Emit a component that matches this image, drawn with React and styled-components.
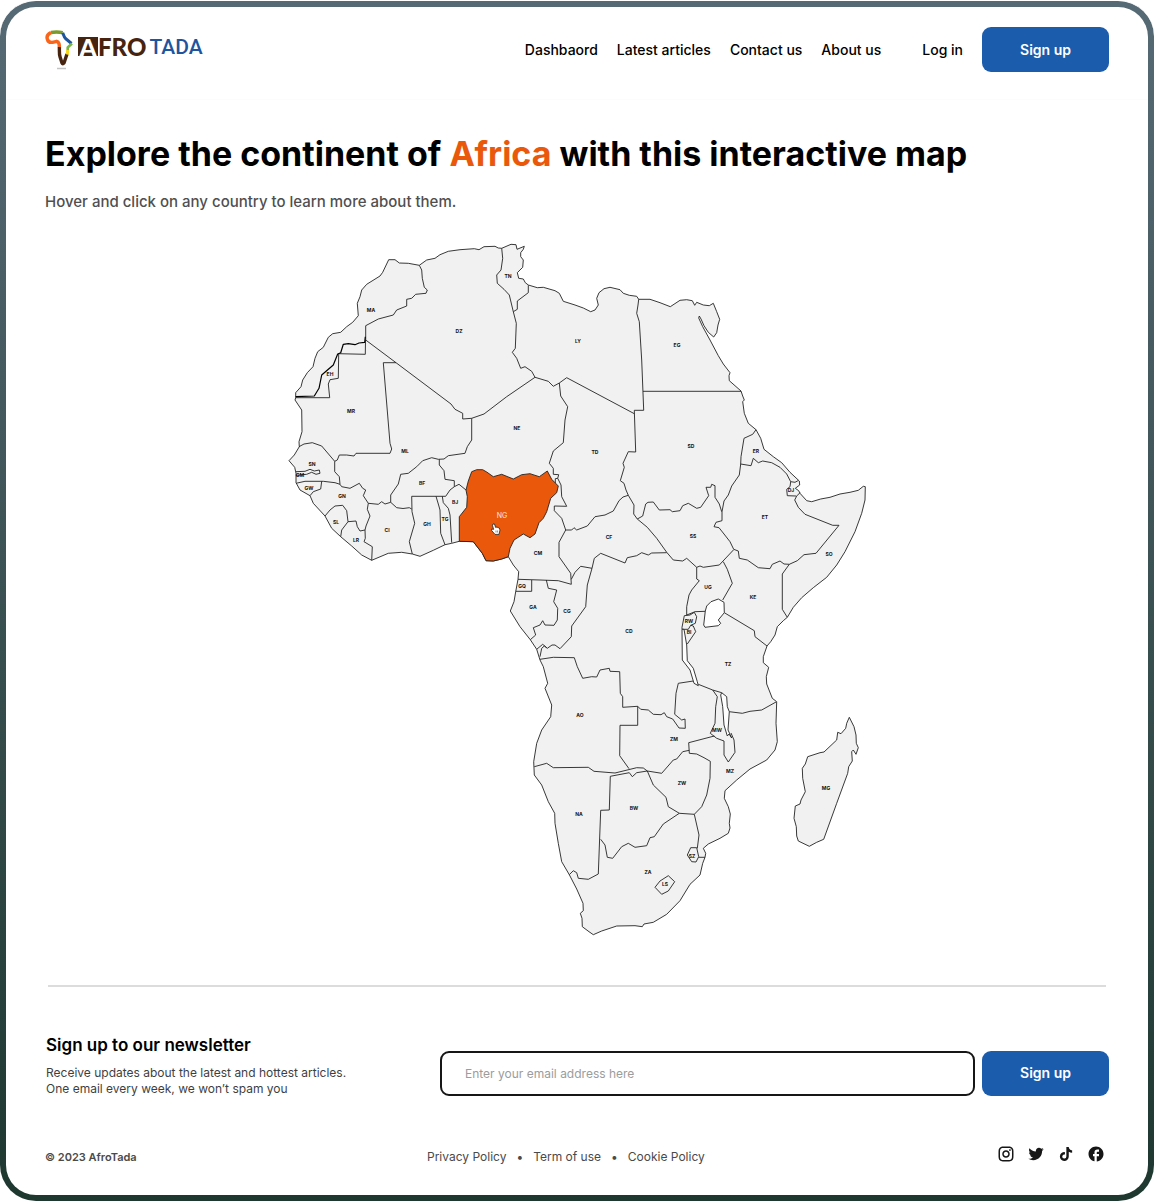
import React from "react";
import styled, { createGlobalStyle } from "styled-components";
import { RiInstagramLine, RiTwitterFill } from "react-icons/ri";
import { MdFacebook } from "react-icons/md";
import { FaTiktok } from "react-icons/fa";

const GlobalStyle = createGlobalStyle`
  *, *::before, *::after { box-sizing: border-box; }
  body {
    margin: 0;
    background: #fff;
    color: #000;
    font-family: Inter, "Liberation Sans", sans-serif;
  }
  h1, h2, p { margin: 0; }
  a { color: inherit; text-decoration: none; }
`;

const Frame = styled.div`
  display: flex;
  min-height: 100vh;
  padding: 6px;
  border-top: 1px solid #fff;
  border-radius: 36px;
  background: linear-gradient(#566a75, #1e372f);
`;

const Page = styled.div`
  flex: 1;
  min-width: 0;
  background: #fff;
  border-radius: 30px;
`;

const Header = styled.header`
  display: flex;
  align-items: center;
  justify-content: space-between;
  padding: 20px 39px 27px;
  border-bottom: 1px solid #fcfcfc;
`;

const Logo = styled.a`
  display: flex;
  align-items: center;
  height: 45px;
`;

const LogoMark = styled.svg`
  width: 28px;
  height: 40px;
  margin-right: 5px;
`;

const LogoText = styled.span`
  display: flex;
  align-items: center;
  padding-bottom: 6px;
`;

const LogoInitial = styled.span`
  width: 20px;
  height: 19px;
  background: #46240f;
  color: #fff;
  font: 900 25px/20px Lato, sans-serif;
  text-align: center;
`;

const LogoWord = styled.span`
  color: ${(p) => (p.$accent ? "#1d559f" : "#46240f")};
  font: ${(p) => (p.$accent ? "500 21px/24px Roboto" : "900 24px/24px Lato")}, sans-serif;
  margin-left: ${(p) => (p.$accent ? 3 : 0)}px;
`;

const Nav = styled.nav`
  display: flex;
  align-items: center;
  gap: 19px;
  font-size: 14px;
  font-weight: 500;
  line-height: 20px;
`;

const LoginLink = styled.a`
  margin-left: 22px;
`;

const Button = styled.button`
  flex: none;
  width: 127px;
  height: 45px;
  border: 0;
  border-radius: 9px;
  background: #1c5cad;
  color: #fff;
  font: 600 14px/20px Inter, sans-serif;
`;

const Main = styled.main`
  padding: 34px 39px 0;
`;

const Title = styled.h1`
  font-size: 34px;
  line-height: 40px;
  font-weight: 700;
`;

const Highlight = styled.span`
  color: #ea580c;
`;

const Subtitle = styled.p`
  margin-top: 18px;
  color: #4f4f4f;
  font-size: 15px;
  line-height: 20px;
  font-weight: 500;
`;

const MapDrawing = styled.svg`
  display: block;
  width: 100%;
  max-width: 600px;
  margin: 24px auto 0;
  stroke-linejoin: round;

  text {
    font: 700 5px Inter, sans-serif;
    text-anchor: middle;
    fill: #111;
  }
`;

const Footer = styled.footer`
  margin: 40px 39px 0;
`;

const Divider = styled.hr`
  height: 2px;
  margin: 0 3px;
  border: 0;
  background: #dcdcdc;
`;

const Newsletter = styled.section`
  display: flex;
  align-items: center;
  padding-top: 46px;
`;

const Intro = styled.div`
  flex: none;
  width: 395px;
  padding-left: 1px;
`;

const IntroTitle = styled.h2`
  font-size: 17px;
  line-height: 24px;
  font-weight: 600;
`;

const IntroText = styled.p`
  margin-top: 8px;
  color: #3f3f3f;
  font-size: 12px;
  line-height: 16px;
`;

const Form = styled.form`
  display: flex;
  align-items: center;
  flex: 1;
  min-width: 0;
  gap: 7px;
  padding-top: 16px;
`;

const EmailInput = styled.input`
  flex: 1;
  min-width: 0;
  height: 45px;
  padding: 0 23px;
  border: 2px solid #161616;
  border-radius: 9px;
  background: #fff;
  font: 400 12px/16px Inter, sans-serif;

  &::placeholder { color: #9c9c9c; opacity: 1; }
`;

const Bottom = styled.div`
  display: flex;
  align-items: center;
  padding-top: 48px;
  color: #4a4a4a;
  font-size: 12px;
  line-height: 24px;
`;

const Copyright = styled.p`
  flex: none;
  width: 382px;
  font-size: 11px;
  font-weight: 600;
`;

const Legal = styled.nav`
  display: flex;
  flex: 1;
  gap: 10px;
`;

const Social = styled.div`
  display: flex;
  gap: 12px;
  padding: 0 4px 6px 0;
  color: #161616;

  a {
    display: flex;
    align-items: center;
    justify-content: center;
    width: 18px;
    height: 18px;
  }
`;

const CONTINENT =
  "M295.7 397.7 295.7 392.7 301 386.7 302.7 380 307.3 372.7 313 366.7 315 358.3 317.7 351.7 323.3 347.3 328.3 337.3 332.7 333.7 340.7 332.3 346.7 326.7 352.7 322.3 358.3 315.7 357.3 303.3 360 296.7 361.7 290 366.7 284.3 380 276 382.7 272.3 388.7 259.7 395 259.7 399.3 263 408.3 263.3 419.3 265.3 426.7 260 435 258.3 440 254.7 448.3 251.3 460 249.7 474.3 248.7 479 249.7 484 246.7 495 246.3 498.3 248 501.7 248.3 511 244.3 516 244.7 517 249.3 524.3 246.3 523.3 249.3 520.7 252.7 520.7 256.7 523.3 260 522.7 267.3 517.3 272.7 518.7 278.3 523.3 279 525.3 282.7 528.3 285 537.3 287.7 543.3 287.3 555 290.7 559.3 293.3 563.3 301.3 575 305 583.3 308 590.7 311.7 595 310 598.3 305 596.7 298.3 599 292.7 604 288.7 610 287.3 620 289.7 623.3 293.3 629.3 295.3 636.7 296.3 638.7 299.3 650 299.3 660 302.7 670.3 306.7 680 300.3 686.7 299.7 692.3 300.7 694.7 305.3 696.7 302.3 703.3 305 709.3 305.7 713.3 303.3 716.7 311.7 719.7 319.3 718 325 716.7 332.7 713.7 337 708.3 332.3 704 325.7 701 319 699.3 316 698.7 318 702.7 326.7 710 340 718.3 355.7 723.3 364 730 372.7 729 375.7 729.3 380.7 741 391 742.7 396 744.3 400 742.7 401.7 744.3 413.3 748.3 423.3 756 429.7 760.7 438.3 764 449.3 773.3 456.7 781.7 462.7 790 472.3 799.3 481 799.7 485 795.3 488.3 798.7 490.7 800 493.3 806.7 500.7 811.7 501.7 820.7 499 830 497.3 840 494 850 492.3 858.3 490.3 863.3 486.3 865.3 486.7 865 500 861.7 513.3 855 531.7 845 551.7 836.7 565 826.7 577.3 813.3 587.7 801.7 597.7 793.3 607.3 787.3 617.3 783.3 620.7 777.3 626.7 775 635 770.7 641.7 767 646 763.3 656.7 763.3 662.7 768.7 667.3 766.3 676.7 766.7 684 772.3 698.3 776.7 701.7 776 723.3 777.3 741.7 775 750 766.7 760 750 769 736.7 780 725 790.7 724.3 798.3 728.3 806.7 730.3 814 729.3 823.3 730 828 728.3 833.3 720 838.3 708.3 844 703.3 848.3 705.7 853.3 705 857.3 702.7 863.3 700 875 690 884.3 680 900.7 666.7 914.3 653.3 922.3 644 924 642.3 926.7 635 925.7 616.7 926 601.7 931 593.3 934.7 589 931.7 582.3 926.7 582 918.3 580.3 913.3 583.3 910.7 583 903.3 576.7 889 569.3 874.7 561.7 861.7 558.3 843.3 555 823.3 554.7 813.3 548.3 801.7 541.7 785 534.3 775 533.7 761.7 536.7 743.3 541.7 730 550.7 716.7 551.7 705 545 688.3 547.7 683.3 543.3 666.7 540 660 536.7 649.3 530.3 639.7 520 626.7 510.3 611 514 601.7 515.7 591.7 518 579.3 518.7 571.7 513.3 565 508.3 556.7 501.7 559 493.3 561 486 560.7 482.3 553.3 473.3 541.7 459.3 541.3 451.7 543.3 445 544.7 433.3 550.3 420 556.3 412.3 554 401.7 552.3 388.3 553.3 371.7 560.3 361.7 555 351.7 546 340.7 536.7 331.7 528.3 325 516 313.3 503.3 310 495.7 300 490 296 482.7 296 473.3 294.7 467.3 289 460.7 294.3 455 299.3 446.7 299 441.7 302 431.7 301.7 410 295 400Z";

const MADAGASCAR =
  "M849.3 717.3 854 726.7 856 735 856.3 743.3 858.3 747.7 856 754.3 853.3 750 851.7 751.7 852.3 761 848.7 766.7 847.7 773.3 836.7 803.3 823.7 839.3 816.7 842.3 809.3 846.3 798.3 841 796.7 836 796.3 826.7 794 818.3 795.3 806 800 804 801 800 805.3 791.7 802.7 778.3 802.3 768.3 805.3 764 807.7 756.7 820 752.7 824 752 836.7 740 837.7 732.3 841 733.7 845.7 728.3 846.7 723.3Z";

const NIGERIA =
  "M459.3 541.3 459.3 516.7 466.7 507.3 467.3 496.7 466 490 468.3 481 471.7 471.7 476.7 469.7 482.7 469.7 486.7 472 493.3 476.7 501.7 474.3 513.3 479 521.7 474.7 530 473.7 539.3 476.7 547.3 471 551.7 479.3 558.3 486 556.7 492.7 550.7 498.3 546.7 511.7 543.3 518.3 539 522.7 535 534 530 537.7 523.3 534 514 540 510 548.3 508.3 556.7 501.7 559 493.3 561 486 560.7 482.3 553.3 473.3 541.7Z";

const BORDERS = [
  // North: Morocco, Algeria, Tunisia, Libya, Egypt
  "M419.3 265.3 421.7 270 422.3 278.3 424.3 287.3 427.3 290 426 293.3 415.7 294.3 411.7 298.3 406.7 299.3 406.7 306 396.7 310 393.3 315 378.3 319 365.7 325.7 365.7 340 396 362.7 451 404 455 409.3 462.7 413.3 462.7 419 471.7 418.3 484 414 506.7 396.7 535 377.3",
  "M365.5 340 365.3 354.3 338.7 353.7 338.3 378.3 330 379.7 328.3 384 329.7 397.7 295.7 397.7",
  "M501.7 248.3 502.7 258.3 501 270 496.7 275 497.3 283.3 504 289.3 509.3 295 513.3 311.7 516.3 323.3 515.3 348.3 512.3 352.3 516.7 358.3 520.7 368.3 525 366.7 531.7 371.3 535 377.3 548.3 381.3 553.3 386.3 559.3 383 566.7 377.7 634.3 413.7",
  "M528.3 285.3V292.7L517.3 301V309.3L513.3 311.7",
  "M638.7 299.3 638 305 636.7 313.3 639.3 321.7 641.7 360 643.7 410.3 634.3 410.3 635.7 452 628.3 451.7 623 463.3 624.3 467.3 620.3 480.7 624 483.3 626 490 628.3 495.3 634 505 633.7 514 637.3 519",
  "M643 391.3H741",
  // West
  "M396 362.7 383.3 362.7 390 443.3 391.7 449 390 453.3 356 453.3 354 456 346.7 455 339.3 455 337.3 460 334.7 461.3",
  "M299 446.7 304 444 312.3 442.7 321.7 446 334.7 461.3 334.7 471.7 339.3 476.7 340 484.3",
  "M296 483.3 305 481.3 323.3 481.3 335 482.7 340 484.3 341.7 486.7 350 488.3 359.3 483.3 362.7 488.3 365.7 490 363.3 495.7 368.3 503.3 367.3 509.3 370 516 366 526 365 530",
  "M296 471.7 305 471.3 310 469.3 314.3 471 319.3 470 320 473.3 316 474.3 311.7 472.3 306.7 474.3 296 475.3",
  "M321.7 481.3 320.7 489 313.3 491.7 310 495.7",
  "M325 516 330 510 335 506 342.7 505.3 346.7 510.7 348 521.7 341.7 530 340.7 536.7",
  "M348 521.7 356 521 357.3 526.7 360 531 365 530 365.3 538.3 364 541.7 372.3 546.7 371.7 560.3",
  "M368.3 503.3 378.3 504.3 381.7 501.7 385 504 390.7 502.3 396.7 507.7 403 508.5 409.3 507.7 411.7 509",
  "M390.7 502.3 390.7 495 398.3 484 400.7 474.3 408.3 473.3 416.7 466.7 422.7 460.7 431.7 457.7 438.3 459.3 444 459 448.3 455.7 465 453.3 467.3 446.7 471.7 440 471.7 418.3",
  "M439.3 459.3 439.3 465 444 470.7 445 479.3 454.3 480.7 454.3 486.7 450 490 445.7 496.3 411.7 496.3 412 511.7 414.7 523.3 409.3 541.7 412.3 554",
  "M436 496.3 438.3 504 440 510 440.7 533.3 445 544.7",
  "M442.3 496.3 443.3 502.7 448.3 508.3 450 515 451.7 542.7",
  "M454.3 486.7 459 484.3 466 490",
  // Chad, Cameroon, Central African Republic, Sudan
  "M559.3 383 560.7 396 567.7 406.7 565 420 563.3 442.7 553.3 451 549.3 463.3 553.3 468.3 553.3 474.3 558.7 474.7 557.7 478.3 561 485 561.7 496.7 566.7 506.3 554.3 506 554.3 510.7 561.7 518.3 565.7 530 559 542.3 559 556.7 570.7 573.3 571.3 584.3",
  "M557.7 478.3 555.3 478.7 555.3 483",
  "M565.7 530 571.7 530 574 527.7 576.7 530 587.3 526 595 516.7 605 515 613.3 511 619 500.7 623 497 628.3 495.3",
  "M637.3 519 642.7 516 645.7 504 648 502.3 653.3 502 659.3 510 670 509.7 672.3 511.7 680 510.7 682.7 505.7 688.3 503.3 696.7 508.3 700.7 507.3 708.7 495.7 706 487.3 710.7 487.3 711.7 484.3 715 485.7 715 497.3 719.3 504 721.7 511.7",
  "M637.3 519 647.3 527.3 656.7 538.3 666.7 552.3 673.3 560 682.7 561 686.7 558.3 696.7 567.3 700 566 703.3 567.3 719.3 565 733.7 549.7",
  // Horn of Africa
  "M756 429.7 752.7 434.3 744 438.3 741 456.7 740.7 464 739.3 475 731.7 486 728.3 495 724 501 722 511.7 722 520.7 716 522.3 714 526.7 719 527.7 724 534 730 541.7 733.7 549.3 738.3 551 739.3 558.3 747.3 560 758.3 567.7 770 568.7 772.3 564.3 780 561 784 564 789.3 564.3 797.3 560.7 804 554.7 816 553.3 839 525.3 832.7 525.3 805 514.3 798.3 507.3 794.7 500 796.7 496 800 492.7",
  "M740.7 464 751 465.7 753.3 458.3 758.3 462.7 762.7 461 771.7 462.7 780 467.3 786.7 474 790.7 481.7 795 482.3 798.3 480.5",
  "M790.7 481.7 790 486.7 786.7 489.3 787.3 495.7 796 496",
  "M789.3 564.3 782.3 574 782.3 609.3 787.3 617.3",
  // Congo basin
  "M666.7 552.7 651.7 553 648.3 555 641.7 552.7 636.7 555.7 627.3 557.7 625 563 600.7 553.3 594.3 558.3 592 568.3 587.3 585 585.7 606.7 571.7 626 571.3 636.7 560 648.7 555 645 552 645 547.3 648.3 544.3 646 541.7 648.3 540 656.7",
  "M592 568.3 580.7 566.3 575 572.3 571.3 579.3",
  "M536.7 649.3 542.7 644.3 546.7 647.7",
  "M518 579.3 540 580 558.3 580.7 571.3 584.3",
  "M531.7 580V591.3H515.7",
  "M546.3 580 548.3 588.3 556.7 590 553.7 601.7 557.7 608.3 557.3 620 554 625.3 545 625 542.7 620.7 540 625 533.3 627.7 535.7 635 530.3 639.7",
  "M540 659.3 553.3 657.3 574.3 657.7 577.3 666.7 582.7 678.3 591.7 676.7 596.7 677 600 670 609.3 668.3 610 671.3 619.7 671.7 620.3 693.3 622.7 696.7 622.7 707.3 637.7 706.3 637.7 725.3 620 725.3 619.7 755.7 629 768.7",
  "M637.7 706.3 640.7 709.3 648.3 710 653.3 714.3 661 714.7 664.3 712.7 666.7 716.7 672.7 719 679 728 685.3 728.3 685 719 681.7 720 674.7 714.3 676 693.3 678.3 683.3 693.3 681",
  // Great Lakes region
  "M696.7 567.3 696.7 579 699.3 580.7 691.7 590 689 595 686.7 606.7 686.7 615 695 611.7 705.3 611.3",
  "M723.3 561.7 727.3 569.3 732.3 583.3 722.7 600",
  "M684.3 615.7 690 615 694.3 612.3 696.7 616.7 695.3 623.3 690.7 625.3 688.3 629.3 682 629.3 682 627.3 684.3 615.7",
  "M690.7 625.3 693.3 626 695.7 631.7 687.3 644",
  "M724.3 612.7 754.3 630.7 755 636.7 767 646",
  "M698.3 684.3 712.7 690 721.7 692.7",
  "M729.3 711.7 742.3 713.3 750 711.3 761.7 710 776 702",
  "M712.7 690 717.3 696.7 715.7 706.7 715 723.3 710.3 733.3 716.7 738.3 724 741 724 755 728.3 762 735 752.3 734 740 731 733",
  // South
  "M714.3 736 688.7 742.7 689.3 753.3 696.7 754 704 757.7 710.3 761.3 710 778.3 706.7 795 701.7 806.7 694.3 814.3 699 835 697.3 848.3",
  "M689.3 750.3 682.7 751.7 676.7 759 673.3 760 661.7 773.3 647.3 771 653.3 785 666 797.3 668.3 806.7 679.3 813.3 694.3 814.3",
  "M534.3 766.7 546.7 763.3 553.3 767.7 588.3 767.3 594 771.3 615 773 636.7 767.7 643.3 768 647.3 771 636.7 772.7 632.3 776.7 629.3 772.7 610.3 776.3 609.3 810 600.7 810.3 598.3 874 588.3 879.3 578.3 878.3 576.7 872.7 573.3 870.7 569.3 874.7",
  "M600.7 839.3 605 845 607.3 857.3 612.7 858.3 621.7 846.7 628.3 843.3 635 847.3 646.7 845.7 650 837.7 654.3 836.7 663.3 824 679.3 813.3",
  "M690.7 847.7 696.7 847.7 698.7 856.7 696 862 691.7 861.7 687.3 855ZM698.7 857.3H705",
  "M668.3 875.7 674.7 881.7 668.3 891 661.7 894.3 655 887.3 660 881Z",
];

const WESTERN_SAHARA =
  "M365.3 336.7 364.7 342.3 359 343 355 344.7 348.3 343.7 343.3 344.3 340.7 352.7 337.7 354 333.3 365 321.7 375 319 388.3 314.3 396 295.7 396.7";

const LAKES = [
  "M705.3 611 706.7 606 711 601.7 718.3 599 724 602.3 724.3 612.7 718.3 620 720.7 623.3 718.3 625.7 705 627.3 703.7 625Z",
  "M684 629.3 682 629.3 682.3 660 690 670 694 683.3 698.3 685.7 697.3 681.7 693.3 668.3 687.3 660.7 686.7 645Z",
  "M721.7 692.7 726.7 696.7 727.3 706.7 729.3 711.7 728 730 731.7 738 729 734 727.3 736 724 725 722.7 706.7 720.7 695Z",
];

const LABELS = [
  ["TN", 508, 276], ["MA", 371, 310], ["DZ", 459, 331], ["LY", 578, 341], ["EG", 677, 345],
  ["EH", 330, 374], ["MR", 351, 411], ["ML", 405, 451], ["NE", 517, 428], ["TD", 595, 452],
  ["SD", 691, 446], ["ER", 756, 451], ["DJ", 791, 490], ["ET", 765, 517], ["SO", 829, 554],
  ["SN", 312, 464], ["GM", 300, 475], ["GW", 309, 488], ["GN", 342, 496], ["SL", 336, 522],
  ["LR", 356, 540], ["CI", 387, 530], ["GH", 427, 524], ["TG", 445, 519], ["BJ", 455, 502],
  ["BF", 422, 483], ["CM", 538, 553], ["CF", 609, 537], ["SS", 693, 536], ["GQ", 522, 586],
  ["GA", 533, 607], ["CG", 567, 611], ["CD", 629, 631], ["UG", 708, 587], ["KE", 753, 597],
  ["RW", 689, 621], ["BI", 689, 632], ["TZ", 728, 664], ["AO", 580, 715], ["ZM", 674, 739],
  ["MW", 717, 730], ["MZ", 730, 771], ["ZW", 682, 783], ["BW", 634, 808], ["NA", 579, 814],
  ["ZA", 648, 872], ["SZ", 692, 856], ["LS", 665, 884], ["MG", 826, 788],
];

const ActiveLabel = styled.text`
  && {
    font-size: 7px;
    font-weight: 400;
    fill: #fdeadf;
  }
`;

function AfricaMap() {
  return (
    <MapDrawing viewBox="277 236 600 709" role="img" aria-label="Map of Africa">
      <g fill="#f1f1f1" stroke="#222" strokeWidth="0.9">
        <path d={CONTINENT} />
        <path d={MADAGASCAR} />
        {BORDERS.map((d) => <path key={d} d={d} fill="none" />)}
        {LAKES.map((d) => <path key={d} d={d} fill="#fff" />)}
        <path d={WESTERN_SAHARA} fill="none" stroke="#000" strokeWidth="1.2" />
        <path d={NIGERIA} fill="#ea580c" />
      </g>
      {LABELS.map(([code, x, y]) => <text key={code} x={x} y={y + 2}>{code}</text>)}
      <ActiveLabel x="502" y="518">NG</ActiveLabel>
      <g stroke="#222" strokeWidth="0.8" strokeLinejoin="round">
        <path
          d="M493 524 494.5 524 495.6 527.4 497 527 498 527.6 499.3 528 500 530 499 534.4 495 534.4 491.6 530.5 491.6 529 493.6 529.4 492.4 525.2Z"
          fill="#fff"
        />
        <path d="M496 530.5V532.5M497.6 530.5V532.5" strokeWidth="0.5" />
      </g>
    </MapDrawing>
  );
}

function Brand() {
  return (
    <Logo href="#" aria-label="Afro Tada">
      <LogoMark viewBox="0 0 28 40" fill="none" strokeWidth="3.4" strokeLinejoin="round">
        <path d="M14.3 16.7C14.6 20 14 24 15 26.7L17 33Q17.7 34.5 19 33L22 24" stroke="#46240f" />
        <path d="M6 2.5C3 4 1.5 6.5 2.3 9 3 12 5.5 12.6 7.5 12.3L11.7 11.3C14 12 14.6 13.5 14.3 17" stroke="#f9661b" />
        <path d="M6 2.5Q12 1.4 17.7 2.7" stroke="#7a9a2c" />
        <path d="M17.7 2.7C18.6 5 19 7 20.5 8.5L26.5 13.5" stroke="#1d559f" strokeWidth="3" />
        <path d="M27 13.5 22.7 17.5V20.5" stroke="#76b843" strokeWidth="2.6" />
        <path d="M22.7 20 22.3 24.5" stroke="#f8d612" strokeWidth="3" />
        <path d="M12 38.5h9" stroke="#c4c4c4" strokeWidth="1.5" />
      </LogoMark>
      <LogoText>
        <LogoInitial>A</LogoInitial>
        <LogoWord>FRO</LogoWord>
        <LogoWord $accent>TADA</LogoWord>
      </LogoText>
    </Logo>
  );
}

export default function App() {
  return (
    <>
      <GlobalStyle />
      <Frame>
        <Page>
          <Header>
            <Brand />
            <Nav aria-label="Main">
              <a href="#">Dashbaord</a>
              <a href="#">Latest articles</a>
              <a href="#">Contact us</a>
              <a href="#">About us</a>
              <LoginLink href="#">Log in</LoginLink>
              <Button type="button">Sign up</Button>
            </Nav>
          </Header>
          <Main>
            <Title>
              Explore the continent of <Highlight>Africa</Highlight> with this interactive map
            </Title>
            <Subtitle>Hover and click on any country to learn more about them.</Subtitle>
            <AfricaMap />
          </Main>
          <Footer>
            <Divider />
            <Newsletter>
              <Intro>
                <IntroTitle>Sign up to our newsletter</IntroTitle>
                <IntroText>
                  Receive updates about the latest and hottest articles.
                  <br />
                  One email every week, we won’t spam you
                </IntroText>
              </Intro>
              <Form>
                <EmailInput type="email" aria-label="Email address" placeholder="Enter your email address here" />
                <Button type="submit">Sign up</Button>
              </Form>
            </Newsletter>
            <Bottom>
              <Copyright>© 2023 AfroTada</Copyright>
              <Legal aria-label="Legal">
                <a href="#">Privacy Policy</a>
                <span>•</span>
                <a href="#">Term of use</a>
                <span>•</span>
                <a href="#">Cookie Policy</a>
              </Legal>
              <Social>
                <a href="#" aria-label="Instagram"><RiInstagramLine size={18} /></a>
                <a href="#" aria-label="Twitter"><RiTwitterFill size={18} /></a>
                <a href="#" aria-label="TikTok"><FaTiktok size={14} /></a>
                <a href="#" aria-label="Facebook"><MdFacebook size={18} /></a>
              </Social>
            </Bottom>
          </Footer>
        </Page>
      </Frame>
    </>
  );
}
